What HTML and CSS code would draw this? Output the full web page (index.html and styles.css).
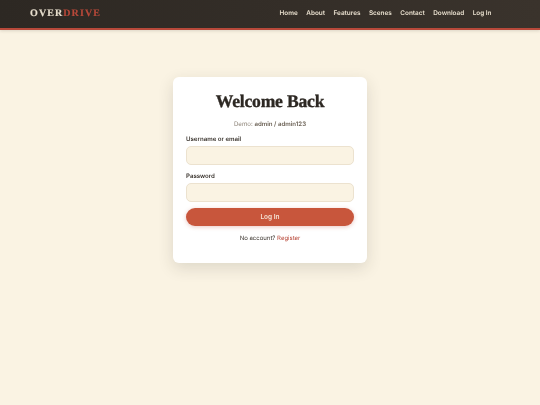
FILE: index.html
```html
<!DOCTYPE html>
<html lang="en">
<head>
<meta charset="utf-8">
<title>Overdrive - Log In</title>
<link rel="stylesheet" href="styles.css">
</head>
<body>
<header class="topbar">
  <a class="logo" href="#">OVER<span class="logo-accent">DRIVE</span></a>
  <nav class="nav">
    <a href="#">Home</a>
    <a href="#">About</a>
    <a href="#">Features</a>
    <a href="#">Scenes</a>
    <a href="#">Contact</a>
    <a href="#">Download</a>
    <a href="#">Log In</a>
  </nav>
</header>
<main class="main">
  <section class="card">
    <h1 class="title">Welcome Back</h1>
    <p class="demo">Demo: <strong>admin / admin123</strong></p>
    <form class="form">
      <label class="label" for="user">Username or email</label>
      <input class="input" id="user" type="text">
      <label class="label" for="pass">Password</label>
      <input class="input" id="pass" type="password">
      <button class="submit" type="button">Log In</button>
    </form>
    <p class="foot">No account? <a href="#">Register</a></p>
  </section>
</main>
</body>
</html>
```
FILE: styles.css
```css
* { box-sizing: border-box; }
html, body { margin: 0; height: 100%; }
body {
  background: #faf3e3;
  font-family: Inter, "Liberation Sans", sans-serif;
  color: #2d2823;
  text-rendering: geometricPrecision;
}
a { text-decoration: none; color: inherit; }
.topbar {
  height: 30px;
  display: flex;
  align-items: center;
  justify-content: space-between;
  padding: 0 48.5px 2px 30px;
  background: linear-gradient(90deg, #2d2823, #3a332c);
  border-bottom: 2px solid #b8493a;
  box-shadow: 0 1px 3px rgba(45, 40, 35, .15);
  will-change: opacity;
}
.logo {
  font-family: "Liberation Serif", serif;
  font-weight: 700;
  font-size: 10px;
  letter-spacing: 1.1px;
  color: #e8dfce;
  -webkit-text-stroke: .15px currentColor;
}
.logo-accent { color: #b8493a; }
.nav { display: flex; gap: 8.5px; }
.nav a {
  font-size: 6.4px;
  font-weight: 600;
  color: #e8dfce;
}
.main { display: flex; justify-content: center; padding-top: 47px; }
.card {
  width: 194px;
  height: 186px;
  padding: 12px 13px;
  background: #fff;
  border-radius: 6px;
  box-shadow: 0 5px 16px rgba(45, 40, 35, .14);
  will-change: opacity;
}
.title {
  margin: 0;
  text-align: center;
  font-family: "Liberation Serif", serif;
  font-weight: 700;
  font-size: 17.6px;
  letter-spacing: -.2px;
  line-height: 24px;
  color: #2d2823;
  -webkit-text-stroke: .35px currentColor;
}
.demo {
  margin: 7px 0 0;
  text-align: center;
  font-size: 6.1px;
  line-height: 10px;
  color: #8b8175;
}
.demo strong { font-weight: 600; color: #6b6155; }
.form { display: flex; flex-direction: column; margin-top: 4px; }
.label {
  font-size: 6.1px;
  font-weight: 600;
  line-height: 10px;
  margin: 1px 0;
  color: #3a342e;
}
.input {
  height: 19px;
  margin-bottom: 6px;
  background: #faf3e3;
  border: 1px solid #ece2cf;
  border-radius: 5px;
  outline: none;
}
.submit {
  height: 18px;
  border: 0;
  border-radius: 9px;
  background: #c8563c;
  color: #f5e3d6;
  font-family: inherit;
  font-size: 6.5px;
  font-weight: 600;
  box-shadow: 0 1px 4px rgba(184, 73, 58, .3);
}
.foot {
  margin: 8px 0 0;
  text-align: center;
  font-size: 6px;
  line-height: 10px;
  color: #3a342e;
}
.foot a { color: #b8493a; }
```
